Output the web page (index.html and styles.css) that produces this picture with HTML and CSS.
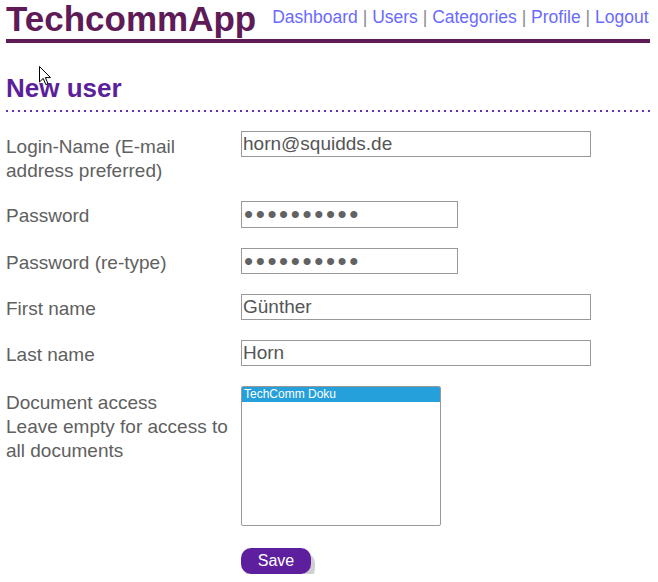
FILE: index.html
```html
<!DOCTYPE html>
<html lang="de">
<head>
    <meta charset="UTF-8">
    <meta name="viewport" content="width=device-width, initial-scale=1.0">
    <title>TechcommApp - New user</title>
    <link rel="stylesheet" href="styles.css">
</head>
<body>
    <header class="topbar">
        <a class="brand" href="#">TechcommApp</a>
        <nav class="mainnav">
            <a href="#">Dashboard</a> <span class="sep">|</span>
            <a href="#">Users</a> <span class="sep">|</span>
            <a href="#">Categories</a> <span class="sep">|</span>
            <a href="#">Profile</a> <span class="sep">|</span>
            <a href="#">Logout</a>
        </nav>
    </header>

    <main class="content">
        <h2 class="page-title">New user</h2>

        <form class="user-form" onsubmit="return false;">
            <div class="form-row row-login">
                <label class="form-label" for="login">Login-Name (E-mail address preferred)</label>
                <input class="field field-wide" type="text" id="login" value="horn@squidds.de">
            </div>

            <div class="form-row">
                <label class="form-label single" for="pw">Password</label>
                <input class="field field-password" type="password" id="pw" value="secret1234">
            </div>

            <div class="form-row">
                <label class="form-label single" for="pw2">Password (re-type)</label>
                <input class="field field-password retype" type="password" id="pw2" value="secret1234">
            </div>

            <div class="form-row">
                <label class="form-label single" for="firstname">First name</label>
                <input class="field field-wide" type="text" id="firstname" value="Günther">
            </div>

            <div class="form-row">
                <label class="form-label single" for="lastname">Last name</label>
                <input class="field field-wide" type="text" id="lastname" value="Horn">
            </div>

            <div class="form-row row-docs">
                <label class="form-label" for="docs">Document access<br>Leave empty for access to all documents</label>
                <select class="doc-list" id="docs" multiple>
                    <option selected>TechComm Doku</option>
                </select>
            </div>

            <div class="form-actions">
                <button class="btn-save" type="submit">Save</button>
            </div>
        </form>
    </main>

    <svg class="cursor" width="13" height="20" viewBox="0 0 13 20">
        <path d="M0.5 0.5 L0.5 16 L4.2 12.4 L6.8 18.6 L9 17.7 L6.4 11.6 L11.5 11.6 Z" fill="#fff" stroke="#000" stroke-width="1"/>
    </svg>
</body>
</html>
```

FILE: styles.css
```css
/* Base */
body {
    margin: 0 8px 0 6px;
    font-family: "Liberation Sans", Arial, sans-serif;
    color: #606060;
    background: #fff;
    position: relative;
}

/* Header with brand and navigation */
.topbar {
    display: flex;
    align-items: flex-start;
    padding-top: 2px;
    padding-bottom: 3px;
    border-bottom: 4px solid #5e1b57;
}

.brand {
    font-size: 35px;
    line-height: 34px;
    font-weight: bold;
    color: #5e1b57;
    text-decoration: none;
}

.mainnav {
    margin-left: 16px;
    padding-top: 2px;
    font-size: 17.5px;
    line-height: 26px;
    white-space: nowrap;
}

.mainnav a {
    color: #6a6aff;
    text-decoration: none;
}

.mainnav .sep {
    color: #8c8a98;
}

/* Page heading */
.page-title {
    margin: 30px 0 0 0;
    padding-bottom: 7px;
    font-size: 26px;
    line-height: 30px;
    font-weight: bold;
    color: #5c1f9c;
    background: linear-gradient(to right, #6a2fb0 2px, transparent 2px) left bottom / 6px 2px repeat-x;
    border-bottom: 2px solid transparent;
    background-origin: border-box;
}

/* Form */
.user-form {
    margin-top: 17px;
}

.form-row {
    display: flex;
    align-items: flex-start;
    margin-bottom: 20px;
}

.form-label {
    width: 230px;
    margin-right: 5px;
    flex-shrink: 0;
    font-size: 19px;
    line-height: 24px;
}

.form-label.single {
    line-height: 22px;
    padding-top: 4px;
}

.row-login {
    margin-bottom: 18px;
}

.row-login .form-label {
    padding-top: 6px;
}

.row-login .field {
    margin-top: 2px;
}

.row-docs .form-label {
    padding-top: 5px;
}

.field {
    box-sizing: border-box;
    height: 26px;
    margin: 0;
    padding: 0 1px;
    border: 1px solid #999;
    border-radius: 0;
    font-family: "Liberation Sans", Arial, sans-serif;
    font-size: 19px;
    color: #555;
    outline: none;
}

.field-wide {
    width: 350px;
}

.field-password {
    width: 217px;
    height: 27px;
    padding-left: 2px;
    font-size: 26px;
    letter-spacing: 2.6px;
    color: #626262;
}

.field-password.retype {
    height: 26px;
}

.doc-list {
    box-sizing: border-box;
    width: 200px;
    height: 140px;
    margin: 0;
    padding: 0;
    border: 1px solid #999;
    font-family: "Liberation Sans", Arial, sans-serif;
    font-size: 12px;
    outline: none;
}

.doc-list option {
    padding: 0 2px 1px;
}

.doc-list option:checked {
    background: linear-gradient(#26a0da, #26a0da);
    color: #fff;
}

.form-actions {
    padding-left: 235px;
    margin-top: 22px;
}

.btn-save {
    height: 26px;
    width: 70px;
    padding: 0;
    border: none;
    border-radius: 10px;
    background: #5e1f9e;
    color: #fff;
    font-family: "Liberation Sans", Arial, sans-serif;
    font-size: 16px;
    box-shadow: 4px 5px 1px #cfcfcf;
    cursor: pointer;
}

/* Mouse pointer captured in the screenshot */
.cursor {
    position: absolute;
    left: 33px;
    top: 66px;
}
```
